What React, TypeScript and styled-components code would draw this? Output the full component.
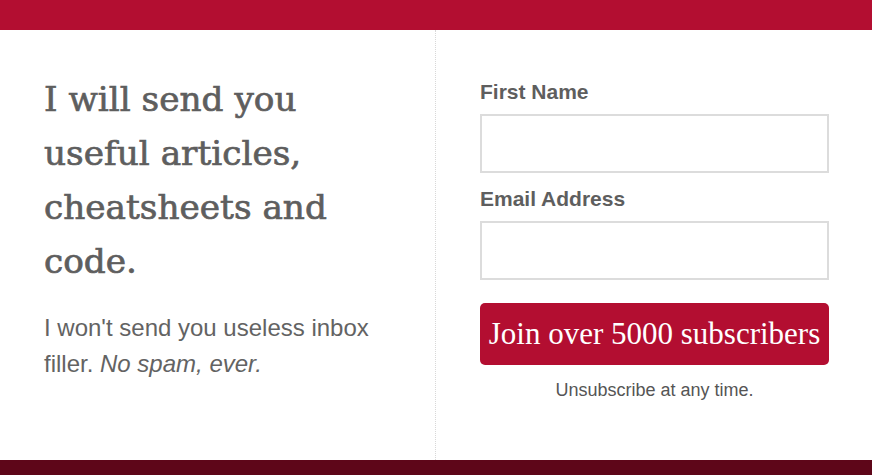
import React from "react";
import styled, { createGlobalStyle } from "styled-components";

const Global = createGlobalStyle`
  html, body { margin: 0; padding: 0; background: #fff; }
  body { font-family: "Liberation Sans", Arial, sans-serif; }
  * { box-sizing: border-box; }
`;

const Page = styled.div`
  width: 872px;
  height: 475px;
  display: flex;
  flex-direction: column;
  overflow: hidden;
`;

const TopBar = styled.div`
  height: 30px;
  background: #b30e31;
  flex: none;
`;

const Main = styled.div`
  flex: 1;
  display: grid;
  grid-template-columns: 436px 1fr;
`;

const Intro = styled.div`
  border-right: 1px dotted #d8d8d8;
  padding: 42px 50px 0 44px;
`;

const Heading = styled.h2`
  margin: 0;
  font-family: "DejaVu Serif", serif;
  font-weight: 400;
  font-size: 34.3px;
  line-height: 54px;
  color: #5e5e5e;
  -webkit-text-stroke: 0.7px #5e5e5e;
`;

const Blurb = styled.p`
  margin: 22px 0 0;
  font-family: "Liberation Sans", Arial, sans-serif;
  font-size: 24px;
  line-height: 36px;
  color: #636363;
`;

const Form = styled.form`
  padding: 50px 43px 0 44px;
  display: flex;
  flex-direction: column;
`;

const Label = styled.label`
  font-family: "Liberation Sans", Arial, sans-serif;
  font-weight: 700;
  font-size: 21px;
  line-height: 24px;
  color: #5e5e5e;
  margin-bottom: 10px;
`;

const Input = styled.input`
  height: 59px;
  width: 100%;
  border: 2px solid #dcdcdc;
  background: #fff;
  margin-bottom: 14px;
  font-size: 18px;
  padding: 0 12px;
  outline: none;
`;

const Button = styled.button`
  height: 62px;
  width: 100%;
  margin-top: 9px;
  border: none;
  border-radius: 5px;
  background: #b30e31;
  color: #fff;
  font-family: "Liberation Serif", "Times New Roman", serif;
  font-size: 31px;
  cursor: pointer;
  padding: 0;
`;

const Note = styled.p`
  margin: 14px 0 0;
  text-align: center;
  font-family: "Liberation Sans", Arial, sans-serif;
  font-size: 18px;
  line-height: 22px;
  color: #555;
`;

const BottomBar = styled.div`
  height: 15px;
  background: #5e0619;
  flex: none;
`;

export default function App() {
  return (
    <>
      <Global />
      <Page>
        <TopBar />
        <Main>
          <Intro>
            <Heading>I will send you useful articles, cheatsheets and code.</Heading>
            <Blurb>
              I won't send you useless inbox filler. <em>No spam, ever.</em>
            </Blurb>
          </Intro>
          <Form onSubmit={(e) => e.preventDefault()}>
            <Label htmlFor="fname">First Name</Label>
            <Input id="fname" type="text" />
            <Label htmlFor="email">Email Address</Label>
            <Input id="email" type="email" />
            <Button type="submit">Join over 5000 subscribers</Button>
            <Note>Unsubscribe at any time.</Note>
          </Form>
        </Main>
        <BottomBar />
      </Page>
    </>
  );
}
